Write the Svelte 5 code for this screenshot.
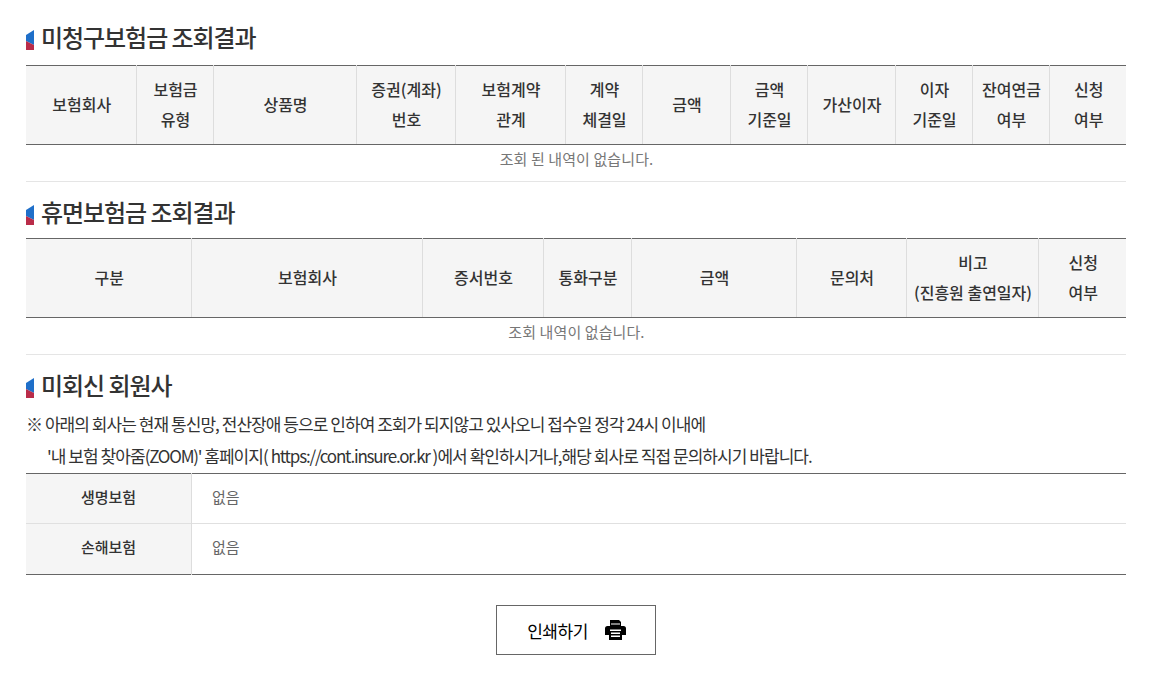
<script>
  const claimCols = [110, 77, 143, 99, 110, 77, 88, 77, 88, 77, 77, 77];
  const claimHead = [
    ['보험회사'], ['보험금', '유형'], ['상품명'], ['증권(계좌)', '번호'], ['보험계약', '관계'], ['계약', '체결일'],
    ['금액'], ['금액', '기준일'], ['가산이자'], ['이자', '기준일'], ['잔여연금', '여부'], ['신청', '여부']
  ];
  const dormantCols = [165, 231, 121, 88, 165, 110, 132, 88];
  const dormantHead = [
    ['구분'], ['보험회사'], ['증서번호'], ['통화구분'], ['금액'], ['문의처'], ['비고', '(진흥원 출연일자)'], ['신청', '여부']
  ];
</script>

{#snippet mark()}
  <svg class="mark" width="8" height="20" viewBox="0 0 8 20" aria-hidden="true">
    <path d="M8 0V15L0 11V5Z" fill="#1f6fc9" />
    <path d="M0 11L8 15V20H0Z" fill="#b92c49" />
  </svg>
{/snippet}

{#snippet listTable(cols, head, empty)}
  <table class="list">
    <colgroup>
      {#each cols as w}
        <col style="width: {w}px" />
      {/each}
    </colgroup>
    <thead>
      <tr>
        {#each head as lines}
          <th>
            {#each lines as line, i}
              {#if i > 0}<br />{/if}{line}
            {/each}
          </th>
        {/each}
      </tr>
    </thead>
    <tbody>
      <tr><td colspan={cols.length}>{empty}</td></tr>
    </tbody>
  </table>
{/snippet}

<main>
  <h2 class="first">{@render mark()}미청구보험금 조회결과</h2>
  {@render listTable(claimCols, claimHead, '조회 된 내역이 없습니다.')}

  <h2>{@render mark()}휴면보험금 조회결과</h2>
  {@render listTable(dormantCols, dormantHead, '조회 내역이 없습니다.')}

  <h2>{@render mark()}미회신 회원사</h2>
  <p class="notice">※ 아래의 회사는 현재 통신망, 전산장애 등으로 인하여 조회가 되지않고 있사오니 접수일 정각 24시 이내에</p>
  <p class="notice indent">'내 보험 찾아줌<span class="latin">(ZOOM)'</span> 홈페이지( <span class="latin">https://cont.insure.or.kr</span> )에서 확인하시거나,해당 회사로 직접 문의하시기 바랍니다.</p>

  <table class="side">
    <tbody>
      <tr><th>생명보험</th><td>없음</td></tr>
      <tr><th>손해보험</th><td>없음</td></tr>
    </tbody>
  </table>

  <div class="actions">
    <button type="button">
      인쇄하기
      <svg width="21" height="20" viewBox="0 0 21 20" aria-hidden="true">
        <path fill="#000" d="M5 0H14L16 2V6H18.5Q21 6 21 8.5V15H17V20H4V15H0V8.5Q0 6 2.5 6H5Z" />
        <rect x="6" y="3.5" width="9" height="1" fill="#fff" />
        <rect x="5" y="9.5" width="11" height="1.5" fill="#fff" />
        <rect x="6" y="12.5" width="9" height="1.5" fill="#fff" />
        <rect x="6" y="15.5" width="9" height="1.5" fill="#fff" />
      </svg>
    </button>
  </div>
</main>

<style>
  :global(body) {
    background: #fff;
  }
  main {
    width: 1100px;
    margin-left: 26px;
    padding-top: 20px;
    font-family: "Noto Sans CJK KR", "Noto Sans", sans-serif;
    color: #333;
  }
  h2 {
    display: flex;
    align-items: flex-start;
    gap: 7px;
    margin: 0;
    height: 33px;
    font-size: 24px;
    font-weight: 500;
    line-height: 33px;
    letter-spacing: -1.05px;
    color: #333;
  }
  h2.first {
    height: 35px;
  }
  .mark {
    flex: none;
    margin-top: 10px;
  }
  table {
    width: 1100px;
    border-collapse: collapse;
    table-layout: fixed;
  }
  .list {
    margin: 10px 0 13px;
    border-top: 1px solid #666;
  }
  .list th {
    height: 76px;
    padding: 0 0 2px 2px;
    background: #f5f5f5;
    border-left: 1px solid #ddd;
    border-bottom: 1px solid #666;
    font-size: 16px;
    font-weight: 500;
    line-height: 30px;
    color: #333;
  }
  .list th:first-child {
    border-left: 0;
  }
  .list td {
    height: 28px;
    padding: 0 0 8px 1px;
    border-bottom: 1px solid #e5e5e5;
    text-align: center;
    font-size: 15px;
    line-height: 20px;
    letter-spacing: 0.1px;
    color: #777;
  }
  .notice {
    margin: 0;
    height: 32px;
    font-size: 17px;
    line-height: 32px;
    letter-spacing: -0.95px;
    color: #333;
    white-space: nowrap;
  }
  h2 + .notice {
    margin-top: 7px;
  }
  .indent {
    padding-left: 21px;
  }
  .latin {
    letter-spacing: -1.2px;
  }
  .side {
    margin-top: 1px;
    border-top: 1px solid #666;
    border-bottom: 1px solid #666;
  }
  .side tr + tr {
    border-top: 1px solid #e0e0e0;
  }
  .side th {
    width: 165px;
    height: 44px;
    padding: 0 0 5px;
    background: #f5f5f5;
    border-right: 1px solid #ddd;
    font-size: 15px;
    font-weight: 500;
    color: #333;
  }
  .side tr:last-child th {
    height: 45px;
  }
  .side td {
    padding: 0 0 5px 20px;
    font-size: 15px;
    color: #666;
  }
  .actions {
    display: flex;
    justify-content: center;
    margin: 30px 0 18px;
  }
  button {
    display: flex;
    align-items: center;
    justify-content: center;
    gap: 17px;
    width: 160px;
    height: 50px;
    padding: 0 0 0 1px;
    background: #fff;
    border: 1px solid #666;
    font-family: inherit;
    font-size: 17px;
    letter-spacing: -0.5px;
    color: #000;
  }
</style>
